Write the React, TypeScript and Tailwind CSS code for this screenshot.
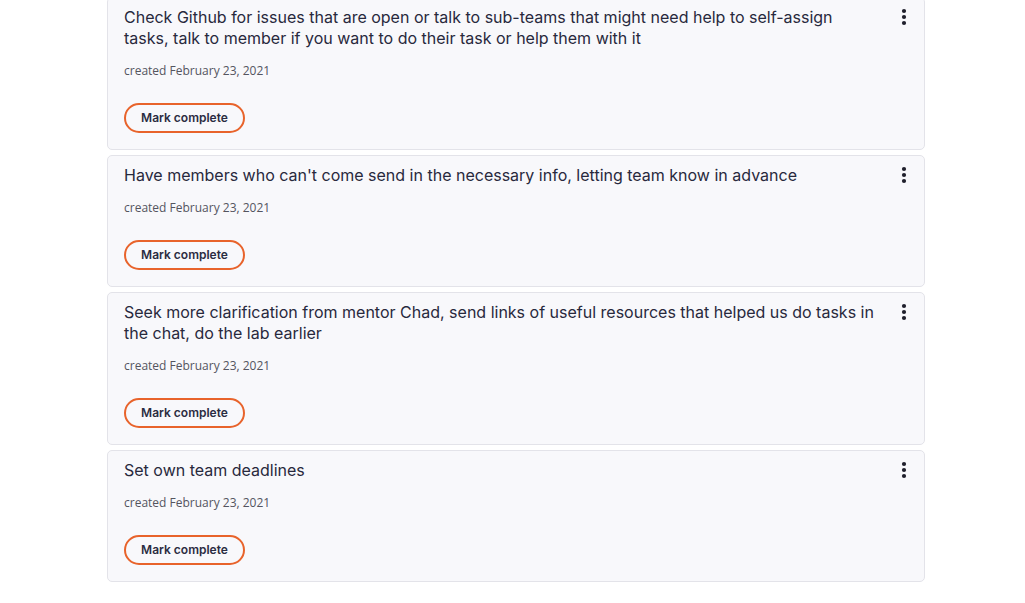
import React from "react";

interface Task {
  id: number;
  title: string;
  created: string;
}

const tasks: Task[] = [
  {
    id: 1,
    title:
      "Check Github for issues that are open or talk to sub-teams that might need help to self-assign tasks, talk to member if you want to do their task or help them with it",
    created: "February 23, 2021",
  },
  {
    id: 2,
    title: "Have members who can't come send in the necessary info, letting team know in advance",
    created: "February 23, 2021",
  },
  {
    id: 3,
    title:
      "Seek more clarification from mentor Chad, send links of useful resources that helped us do tasks in the chat, do the lab earlier",
    created: "February 23, 2021",
  },
  {
    id: 4,
    title: "Set own team deadlines",
    created: "February 23, 2021",
  },
];

function KebabIcon() {
  return (
    <svg width="6" height="18" viewBox="0 0 6 18" fill="#1f1f2b">
      <circle cx="3" cy="3" r="2.1" />
      <circle cx="3" cy="9" r="2.1" />
      <circle cx="3" cy="15" r="2.1" />
    </svg>
  );
}

function TaskCard({ task }: { task: Task }) {
  return (
    <div className="bg-[#f8f8fb] border border-[#e3e3e9] rounded-[5px] pl-4 pr-[17px] pt-[9px] pb-4">
      <div className="flex items-start justify-between">
        <p className="w-[752px] text-[16px] leading-[21px] text-[#28293d] font-['Inter',sans-serif]">
          {task.title}
        </p>
        {/* menu */}
        <button className="shrink-0 mt-[1px]">
          <KebabIcon />
        </button>
      </div>
      <p className="mt-[13px] text-[12px] leading-[18px] text-[#54555f] font-['Open_Sans',sans-serif]">
        created {task.created}
      </p>
      <button className="mt-[23px] h-[30px] w-[121px] rounded-full border-2 border-[#e8632b] text-[12px] font-semibold text-[#2b2c42] font-['Inter',sans-serif]">
        Mark complete
      </button>
    </div>
  );
}

export default function App() {
  return (
    <div className="min-h-screen bg-white">
      <div className="w-[818px] ml-[107px] -mt-[3px] flex flex-col gap-[5px]">
        {tasks.map((t) => (
          <TaskCard key={t.id} task={t} />
        ))}
      </div>
    </div>
  );
}
